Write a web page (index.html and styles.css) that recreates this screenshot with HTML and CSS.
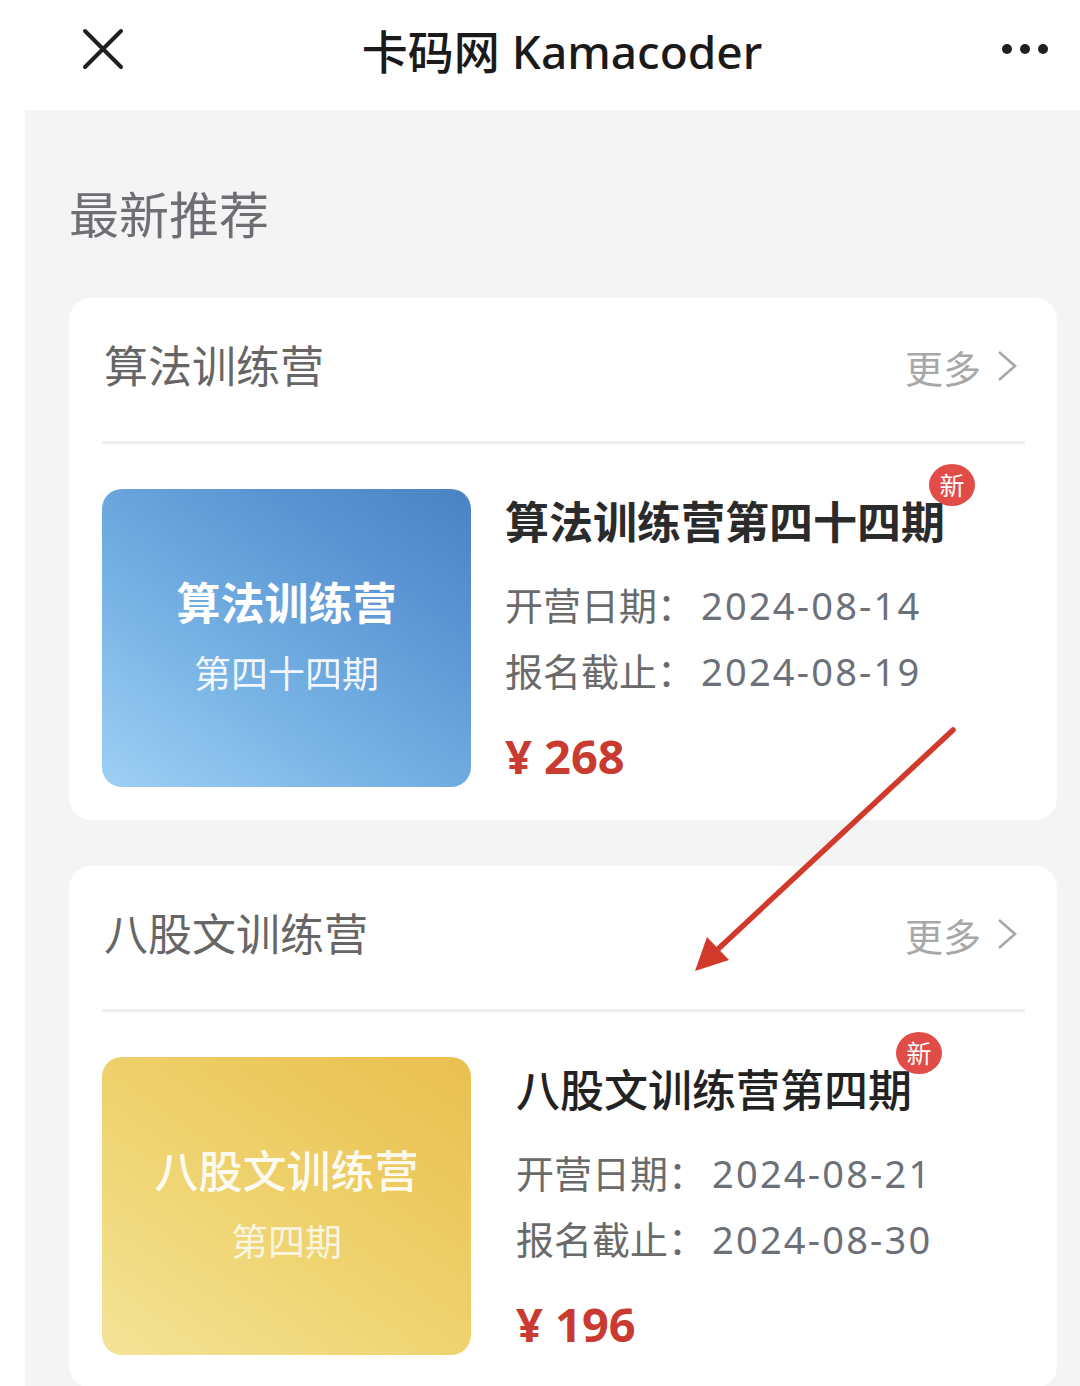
FILE: index.html
```html
<!DOCTYPE html>
<html lang="zh-CN">
<head>
  <meta charset="UTF-8">
  <title>卡码网 Kamacoder</title>
  <link rel="stylesheet" href="styles.css">
</head>
<body>
  <header class="topbar">
    <span class="topbar-close">
      <svg width="42" height="42" viewBox="0 0 42 42"><path d="M3 3 L39 39 M39 3 L3 39" stroke="#1f1f1f" stroke-width="4" stroke-linecap="round"/></svg>
    </span>
    <div class="topbar-title">卡码网 Kamacoder</div>
    <span class="topbar-more">
      <svg width="50" height="14" viewBox="0 0 50 14"><circle cx="7" cy="7" r="5" fill="#1f1f1f"/><circle cx="25" cy="7" r="5" fill="#1f1f1f"/><circle cx="43" cy="7" r="5" fill="#1f1f1f"/></svg>
    </span>
  </header>

  <main class="main">
    <h2 class="section-title">最新推荐</h2>

    <section class="camp">
      <div class="camp-head">
        <span class="camp-name">算法训练营</span>
        <a class="camp-more">更多<svg width="24" height="36" viewBox="0 0 24 36"><path d="M4 4 L20 18 L4 32" fill="none" stroke="#a8a8a8" stroke-width="2.6"/></svg></a>
      </div>
      <div class="camp-body">
        <div class="thumb thumb-blue">
          <div class="thumb-main">算法训练营</div>
          <div class="thumb-sub">第四十四期</div>
        </div>
        <div class="info">
          <div class="info-title"><span class="title-text">算法训练营第四十四期<i class="badge">新</i></span></div>
          <div class="info-line">开营日期：<span class="date">2024-08-14</span></div>
          <div class="info-line">报名截止：<span class="date">2024-08-19</span></div>
          <div class="price">¥ 268</div>
        </div>
      </div>
    </section>

    <section class="camp camp-b">
      <div class="camp-head">
        <span class="camp-name">八股文训练营</span>
        <a class="camp-more">更多<svg width="24" height="36" viewBox="0 0 24 36"><path d="M4 4 L20 18 L4 32" fill="none" stroke="#a8a8a8" stroke-width="2.6"/></svg></a>
      </div>
      <div class="camp-body">
        <div class="thumb thumb-yellow">
          <div class="thumb-main">八股文训练营</div>
          <div class="thumb-sub">第四期</div>
        </div>
        <div class="info">
          <div class="info-title"><span class="title-text">八股文训练营第四期<i class="badge">新</i></span></div>
          <div class="info-line">开营日期：<span class="date">2024-08-21</span></div>
          <div class="info-line">报名截止：<span class="date">2024-08-30</span></div>
          <div class="price">¥ 196</div>
        </div>
      </div>
    </section>
  </main>

  <!-- annotation arrow drawn over the page -->
  <svg class="arrow" width="1080" height="1386" viewBox="0 0 1080 1386">
    <line x1="953" y1="730" x2="716" y2="951" stroke="#d13a2b" stroke-width="5.5" stroke-linecap="round"/>
    <polygon points="695,971 707,937 729,960" fill="#d13a2b"/>
  </svg>
</body>
</html>
```

FILE: styles.css
```css
body {
  margin: 0;
  background: #fff;
  font-family: "Noto Sans", "Noto Sans CJK SC", sans-serif;
  position: relative;
  overflow: hidden;
  height: 1386px;
}
.topbar {
  height: 110px;
  display: flex;
  align-items: center;
  padding: 0 30px 0 82px;
  box-sizing: border-box;
}
.topbar-close {
  display: flex;
  width: 42px;
  margin-top: -12px;
}
.topbar-title {
  flex: 1;
  text-align: center;
  font-size: 46px;
  color: #1a1a1a;
  font-weight: 500;
  margin-top: -12px;
}
.topbar-more {
  display: flex;
  margin-top: -12px;
}
.main {
  margin-left: 25px;
  background: #f4f4f5;
  padding: 75px 23px 0 44px;
  min-height: 1276px;
  box-sizing: border-box;
}
.section-title {
  margin: 0 0 53px 0;
  font-size: 50px;
  line-height: 60px;
  font-weight: 400;
  color: #6e6f74;
}
.camp {
  background: #fff;
  border-radius: 22px;
  padding: 0 32px 33px 33px;
  margin-bottom: 46px;
}
.camp-head {
  display: flex;
  justify-content: space-between;
  align-items: center;
  padding: 38px 0 45px 2px;
  border-bottom: 3px solid #eeeeef;
}
.camp-name {
  font-size: 44px;
  line-height: 60px;
  color: #666;
}
.camp-more {
  display: flex;
  align-items: center;
  gap: 14px;
  font-size: 38px;
  color: #a8a8a8;
  margin-right: 6px;
}
.camp-body {
  display: flex;
  padding-top: 45px;
}
.thumb {
  width: 369px;
  height: 298px;
  border-radius: 20px;
  flex-shrink: 0;
  display: flex;
  flex-direction: column;
  justify-content: center;
  align-items: center;
  color: #fff;
}
.thumb-blue {
  background: linear-gradient(35deg, #9fd0f5 0%, #74b0e3 40%, #5a93d2 75%, #4a82c4 100%);
}
.thumb-yellow {
  background: linear-gradient(35deg, #f4e397 0%, #efd574 40%, #ecc85c 75%, #eabf50 100%);
}
.thumb-main {
  font-size: 44px;
  line-height: 56px;
  font-weight: 700;
  margin-top: -2px;
}
.thumb-yellow .thumb-main {
  font-weight: 500;
  color: rgba(255, 255, 255, 0.92);
}
.thumb-sub {
  font-size: 37px;
  line-height: 50px;
  margin-top: 18px;
  color: rgba(255, 255, 255, 0.92);
}
.thumb-yellow .thumb-sub {
  color: rgba(255, 255, 255, 0.8);
}
.info {
  padding-left: 34px;
}
.camp-b .info {
  padding-left: 45px;
}
.info-title {
  font-size: 44px;
  line-height: 56px;
  font-weight: 700;
  color: #2b2b2b;
  margin-top: 5px;
}
.camp-b .info-title {
  font-weight: 500;
  color: #222;
}
.title-text {
  position: relative;
  display: inline-block;
}
.badge {
  position: absolute;
  right: -30px;
  top: -30px;
  width: 46px;
  height: 42px;
  border-radius: 50%;
  background: #e14c48;
  color: #fff;
  font-style: normal;
  font-weight: 400;
  font-size: 25px;
  line-height: 42px;
  text-align: center;
}
.info-title + .info-line {
  margin-top: 22px;
}
.info-line {
  font-size: 38px;
  line-height: 66px;
  color: #6a6a6a;
}
.date {
  color: #6c7079;
  letter-spacing: 2.2px;
  margin-left: 6px;
}
.price {
  margin-top: 24px;
  font-size: 47px;
  line-height: 56px;
  font-weight: 700;
  color: #c93a30;
}
.arrow {
  position: absolute;
  left: 0;
  top: 0;
  pointer-events: none;
}
```
